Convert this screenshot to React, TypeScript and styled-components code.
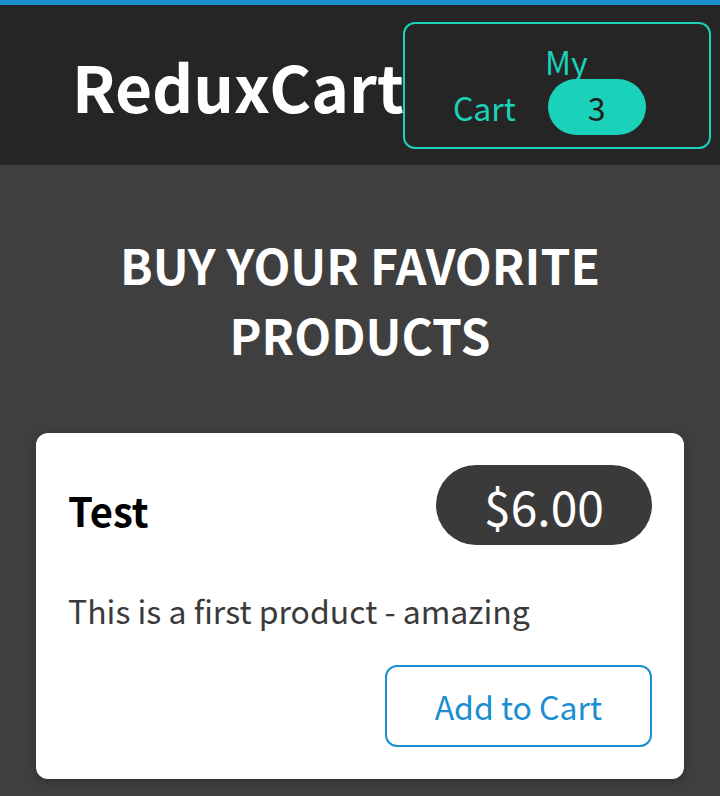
import styled, { createGlobalStyle } from 'styled-components';

const GlobalStyle = createGlobalStyle`
  html {
    font-family: 'Noto Sans CJK JP', 'Noto Sans', sans-serif;
    font-size: 32px;
  }

  body {
    margin: 0;
    background-color: #3f3f3f;
  }
`;

const TopBar = styled.div`
  height: 5px;
  background-color: #1a8ed1;
`;

const Header = styled.header`
  height: 160px;
  padding: 0 72px;
  display: flex;
  align-items: center;
  background-color: #252525;
`;

const Title = styled.h1`
  margin: 0;
  font-size: 64px;
  color: white;
  white-space: nowrap;
`;

const CartButton = styled.button`
  box-sizing: border-box;
  flex-shrink: 0;
  width: 308px;
  margin-left: -1px;
  padding: 14px 0 17px 48px;
  border: 2px solid #1ad1b9;
  border-radius: 12px;
  background-color: transparent;
  color: #1ad1b9;
  font: inherit;
  text-align: left;
  text-indent: 92px;
  cursor: pointer;
`;

const Badge = styled.span`
  margin-left: 32px;
  padding: 5px 40px;
  border-radius: 60px;
  background-color: #1ad1b9;
  color: #1d1d1d;
`;

const Products = styled.section``;

const Heading = styled.h2`
  margin: 64px auto;
  font-size: 48px;
  text-align: center;
  text-transform: uppercase;
  color: white;
`;

const ProductList = styled.ul`
  list-style: none;
  margin: 0;
  padding: 0;
`;

const Item = styled.li`
  margin: 32px 36px;
`;

const Card = styled.div`
  padding: 32px;
  border-radius: 12px;
  background-color: white;
  box-shadow: 0 2px 8px rgba(0, 0, 0, 0.25);
`;

const ItemHeader = styled.header`
  display: flex;
  justify-content: space-between;
  align-items: flex-start;
`;

const ItemName = styled.h3`
  margin: 16px 0;
  font-size: 40px;
  color: black;
`;

const Price = styled.div`
  padding: 5px 48px;
  border-radius: 60px;
  background-color: #3a3a3a;
  color: white;
  font-size: 48px;
`;

const Description = styled.p`
  margin: 32px 0;
  color: #3a3a3a;
`;

const Actions = styled.div`
  display: flex;
  justify-content: flex-end;
`;

const AddButton = styled.button`
  padding: 16px 48px;
  border: 2px solid #1a8ed1;
  border-radius: 12px;
  background-color: transparent;
  color: #1a8ed1;
  font: inherit;
  cursor: pointer;
`;

const products = [
  { id: 'p1', title: 'Test', price: 6, description: 'This is a first product - amazing' }
];

const App = () => {
  return (
    <>
      <GlobalStyle />
      <TopBar />
      <Header>
        <Title>ReduxCart</Title>
        <CartButton>
          My
          <br />
          Cart
          <Badge>3</Badge>
        </CartButton>
      </Header>
      <Products>
        <Heading>Buy your favorite products</Heading>
        <ProductList>
          {products.map((product) => (
            <Item key={product.id}>
              <Card>
                <ItemHeader>
                  <ItemName>{product.title}</ItemName>
                  <Price>${product.price.toFixed(2)}</Price>
                </ItemHeader>
                <Description>{product.description}</Description>
                <Actions>
                  <AddButton>Add to Cart</AddButton>
                </Actions>
              </Card>
            </Item>
          ))}
        </ProductList>
      </Products>
    </>
  );
};

export default App;
